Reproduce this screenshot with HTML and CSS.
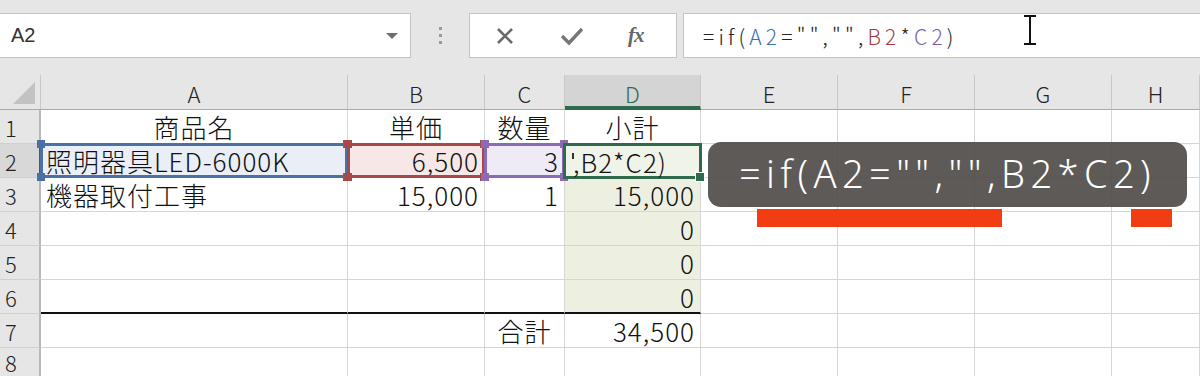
FILE: index.html
```html
<!DOCTYPE html>
<html lang="ja">
<head>
    <meta charset="UTF-8">
    <meta name="viewport" content="width=device-width, initial-scale=1.0">
    <title>Excel IF</title>
    <link rel="stylesheet" href="styles.css">
</head>
<body>
    <div class="toolbar">
        <div class="name-box">
            <span>A2</span>
            <span class="drop"></span>
        </div>
        <div class="dots"><i></i><i></i><i></i></div>
        <div class="fx-box">
            <svg class="ico" width="22" height="22" viewBox="0 0 22 22"><path d="M4 4 L18 18 M18 4 L4 18" stroke="#6a6a6a" stroke-width="2.6" fill="none"/></svg>
            <svg class="ico" width="26" height="22" viewBox="0 0 26 22"><path d="M3 11 L10 18 L23 4" stroke="#777" stroke-width="3.4" fill="none"/></svg>
            <span class="fx">fx</span>
        </div>
        <div class="formula">
            <span>=if(<b class="r-a">A2</b>="","",<b class="r-b">B2</b>*<b class="r-c">C2</b>)</span>
            <span class="ibeam"></span>
        </div>
    </div>

    <div class="sheet">
        <div class="grid">
            <div class="corner"></div>
            <div class="col-h">A</div>
            <div class="col-h">B</div>
            <div class="col-h">C</div>
            <div class="col-h sel">D</div>
            <div class="col-h">E</div>
            <div class="col-h">F</div>
            <div class="col-h">G</div>
            <div class="col-h">H</div>

            <div class="row-h">1</div>
            <div class="cell center">商品名</div>
            <div class="cell center">単価</div>
            <div class="cell center">数量</div>
            <div class="cell center">小計</div>
            <div class="cell"></div><div class="cell"></div><div class="cell"></div><div class="cell"></div>

            <div class="row-h sel">2</div>
            <div class="cell ref ref-a">照明器具LED-6000K</div>
            <div class="cell num ref ref-b">6,500</div>
            <div class="cell num ref ref-c">3</div>
            <div class="cell edit"><span class="caret"></span>,B2*C2)</div>
            <div class="cell"></div><div class="cell"></div><div class="cell"></div><div class="cell"></div>

            <div class="row-h">3</div>
            <div class="cell">機器取付工事</div>
            <div class="cell num">15,000</div>
            <div class="cell num">1</div>
            <div class="cell num fill">15,000</div>
            <div class="cell"></div><div class="cell"></div><div class="cell"></div><div class="cell"></div>

            <div class="row-h">4</div>
            <div class="cell"></div>
            <div class="cell"></div>
            <div class="cell"></div>
            <div class="cell num fill">0</div>
            <div class="cell"></div><div class="cell"></div><div class="cell"></div><div class="cell"></div>

            <div class="row-h">5</div>
            <div class="cell"></div>
            <div class="cell"></div>
            <div class="cell"></div>
            <div class="cell num fill">0</div>
            <div class="cell"></div><div class="cell"></div><div class="cell"></div><div class="cell"></div>

            <div class="row-h">6</div>
            <div class="cell rule"></div>
            <div class="cell rule"></div>
            <div class="cell rule"></div>
            <div class="cell num fill rule">0</div>
            <div class="cell"></div><div class="cell"></div><div class="cell"></div><div class="cell"></div>

            <div class="row-h">7</div>
            <div class="cell"></div>
            <div class="cell"></div>
            <div class="cell center">合計</div>
            <div class="cell num">34,500</div>
            <div class="cell"></div><div class="cell"></div><div class="cell"></div><div class="cell"></div>

            <div class="row-h last">8</div>
            <div class="cell"></div><div class="cell"></div><div class="cell"></div><div class="cell"></div>
            <div class="cell"></div><div class="cell"></div><div class="cell"></div><div class="cell"></div>
        </div>

        <!-- 字幕 -->
        <div class="caption">=if(A2="","",B2*C2)</div>
        <div class="mark mark-1"></div>
        <div class="mark mark-2"></div>
    </div>
</body>
</html>
```

FILE: styles.css
```css
* {
    margin: 0;
    padding: 0;
    box-sizing: border-box;
}

body {
    width: 1200px;
    height: 376px;
    overflow: hidden;
    background: #ffffff;
    font-family: "Noto Sans CJK JP", "Liberation Sans", sans-serif;
    color: #111;
}

/* 上方的數式列 */
.toolbar {
    height: 75px;
    background: #e6e6e6;
    display: flex;
    align-items: flex-start;
    padding-top: 13px;
}

.name-box {
    width: 412px;
    height: 45px;
    margin-left: -1px;
    background: #fff;
    border: 1px solid #c4c4c4;
    display: flex;
    align-items: center;
    justify-content: space-between;
    padding: 0 12px 0 11px;
    font-family: "Liberation Sans", sans-serif;
    font-size: 20px;
    color: #333;
}

.drop {
    width: 0;
    height: 0;
    border-left: 6px solid transparent;
    border-right: 6px solid transparent;
    border-top: 6px solid #6f6f6f;
}

.dots {
    width: 58px;
    height: 45px;
    display: flex;
    flex-direction: column;
    align-items: center;
    justify-content: center;
    gap: 4px;
}

.dots i {
    display: block;
    width: 3px;
    height: 3px;
    background: #9a9a9a;
}

.fx-box {
    width: 208px;
    height: 45px;
    background: #fff;
    border: 1px solid #c4c4c4;
    display: flex;
    align-items: center;
    padding-left: 24px;
    gap: 43px;
}

.fx {
    font-family: "Liberation Serif", serif;
    font-style: italic;
    font-weight: bold;
    font-size: 21px;
    color: #666;
    letter-spacing: -1px;
}

.formula {
    flex: 1;
    height: 45px;
    margin-left: 6px;
    margin-right: -2px;
    background: #fff;
    border: 1px solid #c4c4c4;
    display: flex;
    align-items: center;
    padding-left: 19px;
    font-family: "Noto Sans CJK JP", sans-serif;
    font-weight: 300;
    font-size: 21px;
    color: #222;
    letter-spacing: 4.2px;
}

.formula b {
    font-weight: 300;
}

.r-a { color: #3d6fb4; }
.r-b { color: #a23e3e; }
.r-c { color: #7a5ba8; }

.ibeam {
    width: 12px;
    height: 30px;
    margin-left: 66px;
    margin-top: -12px;
    border-top: 2px solid #111;
    border-bottom: 2px solid #111;
    background: linear-gradient(#111, #111) center / 2px 100% no-repeat;
}

/* 工作表 */
.sheet {
    position: relative;
}

.grid {
    display: grid;
    grid-template-columns: 41px 307px 137px 80px 136px 137px 137px 137px 88px;
    grid-template-rows: 35px;
    grid-auto-rows: 34px;
}

.corner,
.col-h,
.row-h {
    background: #e6e6e6;
    border-right: 1px solid #c8c8c8;
    border-bottom: 1px solid #a9a9a9;
    font-family: "Noto Sans CJK JP", sans-serif;
    font-weight: 300;
    font-size: 22px;
    color: #222;
}

.corner {
    position: relative;
}

.corner::after {
    content: "";
    position: absolute;
    right: 5px;
    bottom: 5px;
    border-left: 22px solid transparent;
    border-bottom: 22px solid #c2c2c2;
}

.col-h {
    display: flex;
    align-items: center;
    justify-content: center;
    padding-top: 1px;
}

.col-h.sel {
    background: #d4d4d4;
    color: #2f6a4d;
    border-bottom: 4px solid #2f6a4d;
    padding-top: 4px;
}

.row-h {
    display: flex;
    align-items: center;
    padding-left: 5px;
    border-bottom: 1px solid #d0d0d0;
    border-right: 2px solid #b8b8b8;
}

.row-h.last {
    align-items: flex-start;
    padding-top: 3px;
    line-height: 22px;
}

.row-h.sel {
    background: #d8d8d8;
    border-right: 2px solid #2f6a4d;
}

.cell {
    border-right: 1px solid #d6d6d6;
    border-bottom: 1px solid #d6d6d6;
    font-size: 26px;
    font-weight: 300;
    letter-spacing: 1px;
    line-height: 33px;
    padding: 0 5px;
    white-space: nowrap;
    overflow: visible;
}

.center { text-align: center; }
.num { text-align: right; }

.fill {
    background: #edf0e1;
}

.rule {
    border-bottom: 2px solid #111;
}

/* 被參照的儲存格 */
.ref {
    position: relative;
}

.ref::before {
    content: "";
    position: absolute;
    top: -1px;
    left: -1px;
    right: -1px;
    bottom: -1px;
    border: 3px solid var(--c);
}

.ref::after {
    content: "";
    position: absolute;
    top: -4px;
    left: -4px;
    right: -4px;
    bottom: -4px;
    background:
        linear-gradient(var(--c), var(--c)) left top / 8px 8px no-repeat,
        linear-gradient(var(--c), var(--c)) right top / 8px 8px no-repeat,
        linear-gradient(var(--c), var(--c)) left bottom / 8px 8px no-repeat,
        linear-gradient(var(--c), var(--c)) right bottom / 8px 8px no-repeat;
}

.ref-a {
    --c: #4b70a3;
    background: #e9eef7;
    z-index: 1;
}

.ref-b {
    --c: #a94848;
    background: #f7e7e7;
    z-index: 2;
}

.ref-c {
    --c: #8b6cb4;
    background: #eeebf6;
    z-index: 3;
}

.edit {
    position: relative;
    background: #f0f3e8;
    border: 3px solid #2f6a4d;
    margin: -1px -1px -1px -2px;
    line-height: 31px;
    padding-left: 6px;
    z-index: 4;
}

.edit::after {
    content: "";
    position: absolute;
    right: -6px;
    bottom: -6px;
    width: 8px;
    height: 8px;
    background: #2f6a4d;
    border: 1px solid #fff;
}

.caret {
    display: inline-block;
    width: 2px;
    height: 6px;
    background: #333;
    vertical-align: top;
    margin-top: 7px;
    margin-right: -1px;
}

/* 字幕與標記 */
.caption {
    position: absolute;
    left: 708px;
    top: 67px;
    width: 479px;
    height: 65px;
    border-radius: 13px;
    background: rgba(82, 78, 75, 0.93);
    color: #ffffff;
    font-family: "Noto Sans", "DejaVu Sans", sans-serif;
    font-weight: 300;
    font-size: 38px;
    letter-spacing: 5.4px;
    line-height: 63px;
    text-align: center;
    z-index: 10;
}

.mark {
    position: absolute;
    top: 134px;
    height: 18px;
    background: #f23d12;
    z-index: 10;
}

.mark-1 {
    left: 757px;
    width: 245px;
}

.mark-2 {
    left: 1131px;
    width: 41px;
}
```
